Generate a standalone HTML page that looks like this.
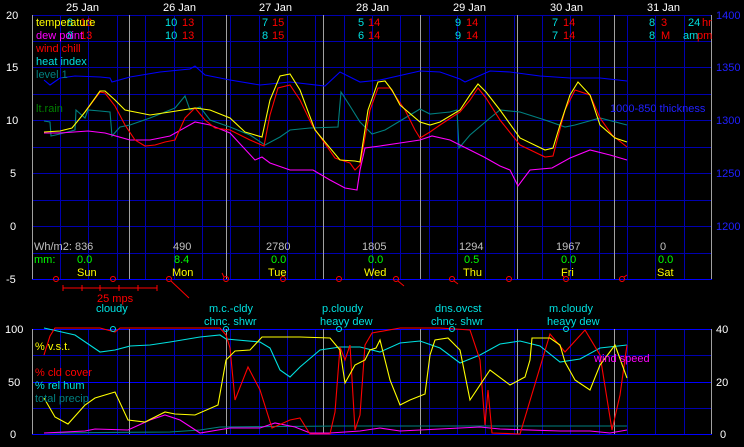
<!DOCTYPE html>
<html><head><meta charset="utf-8"><style>
html,body{margin:0;padding:0;background:#000;width:744px;height:447px;overflow:hidden}
svg{display:block}
text{font-family:"Liberation Sans",sans-serif;font-size:11px}
</style></head><body>
<svg width="744" height="447" viewBox="0 0 744 447" xmlns="http://www.w3.org/2000/svg">
<rect width="744" height="447" fill="#000"/>
<g stroke="#0000b0" stroke-width="1" shape-rendering="crispEdges">
<path d="M32 15.5H712M32 41.5H712M32 67.5H712M32 94.5H712M32 120.5H712M32 147.5H712M32 173.5H712M32 200.5H712M32 226.5H712M32 253.5H712"/>
<path d="M32 355.5H712M32 408.5H712"/>
<path d="M60.5 15V279M88.5 15V279M117.5 15V279M145.5 15V279M174.5 15V279M202.5 15V279M230.5 15V279M259.5 15V279M287.5 15V279M315.5 15V279M344.5 15V279M372.5 15V279M400.5 15V279M429.5 15V279M457.5 15V279M485.5 15V279M514.5 15V279M542.5 15V279M570.5 15V279M599.5 15V279M627.5 15V279M655.5 15V279M684.5 15V279"/>
<path d="M60.5 329V434M88.5 329V434M117.5 329V434M145.5 329V434M174.5 329V434M202.5 329V434M230.5 329V434M259.5 329V434M287.5 329V434M315.5 329V434M344.5 329V434M372.5 329V434M400.5 329V434M429.5 329V434M457.5 329V434M485.5 329V434M514.5 329V434M542.5 329V434M570.5 329V434M599.5 329V434M627.5 329V434M655.5 329V434M684.5 329V434"/>
</g>
<g stroke="#0000ff" shape-rendering="crispEdges"><path d="M32 279.5H712M32 329.5H712M32 382.5H712M32 434.5H712"/></g>
<g stroke="#a0a0a0" shape-rendering="crispEdges">
<path d="M32.5 15V279M129.5 15V279M226.5 15V279M323.5 15V279M420.5 15V279M517.5 15V279M614.5 15V279M711.5 15V279"/>
<path d="M32.5 329V434M129.5 329V434M226.5 329V434M323.5 329V434M420.5 329V434M517.5 329V434M614.5 329V434M711.5 329V434"/>
</g>
<g fill="none" stroke-width="1.1">
<polyline stroke="#0000ff" points="44,80 50,85 60,78 75,76 100,77 110,78 112,82 130,77 160,72 190,69 195,66 205,75 230,80 260,85 290,82 325,86 340,72 360,82 380,80 420,71 440,72 460,79 465,82 490,71 510,72 540,76 570,78 600,78 627,81"/>
<polyline stroke="#008080" points="44,121 50,122 51,136 60,134 75,130 76,110 85,118 88,110 100,111 110,112 112,136 120,127 130,125 150,118 175,108 185,96 190,110 200,107 210,120 230,127 250,135 265,145 280,137 290,130 310,128 338,127 341,92 350,106 360,122 372,134 385,130 400,121 420,109 430,114 440,113 450,112 457,110 459,148 470,135 490,118 500,110 520,112 545,120 565,127 575,125 600,118 627,125"/>
<polyline stroke="#ff00ff" points="44,133 60,133 88,131 105,133 130,140 150,140 170,136 195,122 210,125 230,133 255,160 262,157 270,163 290,170 313,170 330,180 345,188 357,190 360,170 365,148 380,146 400,143 420,140 432,136 450,140 470,150 484,157 500,166 510,170 518,186 530,170 552,168 570,158 590,150 610,155 627,160"/>
<polyline stroke="#ff0000" points="85,112 100,92 105,93 115,106 125,125 135,140 145,146 155,145 165,142 175,140 185,118 195,108 205,120 215,128 230,130 250,140 264,146 270,115 278,88 290,85 300,100 312,125 335,158 350,163 355,170 360,165 370,110 378,88 390,88 405,110 415,130 420,138 430,132 440,125 460,112 470,100 478,88 486,98 500,120 520,145 545,157 553,156 565,110 575,90 590,95 600,118 612,135 627,147"/>
<polyline stroke="#ffff00" points="44,132 60,131 72,128 85,112 100,91 105,91 115,100 125,110 135,112 150,115 170,112 195,108 210,110 230,118 245,132 262,137 270,100 280,76 290,74 300,90 315,130 340,160 355,161 360,162 368,110 378,82 385,81 392,90 400,105 420,122 430,125 440,122 460,110 470,95 478,84 486,92 500,110 520,138 545,150 553,148 560,125 570,95 578,82 590,95 600,125 615,138 627,142"/>
</g>
<g fill="none" stroke-width="1.1">
<polyline stroke="#008080" points="44,433 170,432 200,430 220,427 340,426 627,426"/>
<polyline stroke="#ff00ff" points="44,433 85,431 95,429 128,430 150,420 165,415 180,420 200,433 230,428 260,428 275,423 295,427 310,433 330,433 360,431 380,428 400,431 420,430 480,427 500,429 560,431 590,431 610,433 627,430"/>
<polyline stroke="#00e0e0" points="44,328 75,335 100,352 115,350 130,346 150,345 170,342 200,337 220,335 226,339 260,342 270,348 280,370 290,377 300,367 320,350 340,347 360,347 380,352 400,343 420,341 440,348 460,363 480,355 500,344 520,341 540,346 560,362 580,359 600,348 627,345"/>
<polyline stroke="#ff0000" points="44,355 50,336 55,328 100,328 115,332 120,328 220,328 226,335 230,348 235,400 248,367 260,390 272,428 290,420 300,418 310,434 330,434 335,412 340,347 345,360 350,345 355,430 360,415 365,345 372,333 400,328 440,328 470,330 480,360 485,425 488,390 492,433 520,434 550,334 565,352 585,330 600,355 612,430 620,395 627,345"/>
<polyline stroke="#ffff00" points="44,398 55,417 68,424 85,405 95,398 115,392 128,420 145,422 165,412 175,414 195,415 218,405 226,360 235,351 250,350 262,337 300,337 330,338 340,350 345,383 355,365 365,360 370,350 376,348 380,340 390,380 400,405 410,400 425,394 430,355 435,340 448,338 460,350 470,400 490,370 510,385 525,377 530,360 532,338 550,338 560,345 565,362 575,380 590,390 600,365 615,345 627,378"/>
</g>
<g fill="none" stroke="#ff0000">
<circle cx="56" cy="279" r="2.5"/><circle cx="113" cy="279" r="2.5"/><circle cx="169" cy="279" r="2.5"/><circle cx="226" cy="279" r="2.5"/><circle cx="283" cy="279" r="2.5"/><circle cx="339" cy="279" r="2.5"/><circle cx="396" cy="279" r="2.5"/><circle cx="452" cy="279" r="2.5"/><circle cx="509" cy="279" r="2.5"/><circle cx="566" cy="279" r="2.5"/><circle cx="622" cy="279" r="2.5"/>
<path d="M171 281L189 298M398 281L404 286M454 281L458 284M224 277L222 273M564 277L562 275M624 277L627 275"/>
<path d="M63 288H157M63 285V291M82 285V291M100 285V291M119 285V291M138 285V291M157 285V291"/>
</g>
<g fill="none" stroke="#00e0e0"><circle cx="113" cy="329" r="2.5"/><circle cx="226" cy="329" r="2.5"/><circle cx="339" cy="329" r="2.5"/><circle cx="452" cy="329" r="2.5"/><circle cx="566" cy="329" r="2.5"/></g>
<g fill="#fff">
<text x="6" y="19">20</text><text x="6" y="71">15</text><text x="6" y="124">10</text><text x="10" y="177">5</text><text x="10" y="230">0</text><text x="6" y="283">-5</text>
<text x="5" y="333">100</text><text x="8" y="386">50</text><text x="10" y="438">0</text>
<text x="716" y="333">40</text><text x="716" y="386">20</text><text x="720" y="438">0</text>
<text x="66" y="11">25 Jan</text><text x="163" y="11">26 Jan</text><text x="259" y="11">27 Jan</text><text x="356" y="11">28 Jan</text><text x="453" y="11">29 Jan</text><text x="550" y="11">30 Jan</text><text x="647" y="11">31 Jan</text>
</g>
<g fill="#2020ff"><text x="716" y="19">1400</text><text x="716" y="71">1350</text><text x="716" y="124">1300</text><text x="716" y="177">1250</text><text x="716" y="230">1200</text>
<text x="610" y="112">1000-850 thickness</text></g>
<g fill="#c0c0c0"><text x="34" y="250">Wh/m2: 836</text><text x="173" y="250">490</text><text x="266" y="250">2780</text><text x="362" y="250">1805</text><text x="459" y="250">1294</text><text x="556" y="250">1967</text><text x="660" y="250">0</text></g>
<g fill="#00ff00"><text x="34" y="263">mm:</text><text x="77" y="263">0.0</text><text x="174" y="263">8.4</text><text x="271" y="263">0.0</text><text x="368" y="263">0.0</text><text x="464" y="263">0.5</text><text x="561" y="263">0.0</text><text x="658" y="263">0.0</text></g>
<g fill="#ffff00"><text x="77" y="276">Sun</text><text x="172" y="276">Mon</text><text x="268" y="276">Tue</text><text x="364" y="276">Wed</text><text x="463" y="276">Thu</text><text x="561" y="276">Fri</text><text x="657" y="276">Sat</text></g>
<text x="97" y="302" fill="#ff0000">25 mps</text>
<g fill="#00e0e0">
<text x="96" y="312">cloudy</text><text x="209" y="312">m.c.-cldy</text><text x="204" y="325">chnc. shwr</text>
<text x="322" y="312">p.cloudy</text><text x="320" y="325">heavy dew</text>
<text x="435" y="312">dns.ovcst</text><text x="431" y="325">chnc. shwr</text>
<text x="549" y="312">m.cloudy</text><text x="547" y="325">heavy dew</text>
</g>
<g fill="#00e0e0"><text x="67" y="26">8</text><text x="67" y="39">8</text><text x="165" y="26">10</text><text x="165" y="39">10</text><text x="262" y="26">7</text><text x="262" y="39">8</text><text x="358" y="26">5</text><text x="358" y="39">6</text><text x="455" y="26">9</text><text x="455" y="39">9</text><text x="552" y="26">7</text><text x="552" y="39">7</text><text x="649" y="26">8</text><text x="649" y="39">8</text><text x="688" y="26">24</text><text x="683" y="39">am</text></g>
<g fill="#ff0000"><text x="80" y="26">13</text><text x="80" y="39">13</text><text x="182" y="26">13</text><text x="182" y="39">13</text><text x="272" y="26">15</text><text x="272" y="39">15</text><text x="368" y="26">14</text><text x="368" y="39">14</text><text x="466" y="26">14</text><text x="466" y="39">14</text><text x="563" y="26">14</text><text x="563" y="39">14</text><text x="661" y="26">3</text><text x="661" y="39">M</text><text x="702" y="26">hr</text><text x="697" y="39">pm</text></g>
<text x="36" y="26" fill="#ffff00">temperature</text>
<text x="36" y="39" fill="#ff00ff">dew point</text>
<text x="36" y="52" fill="#ff0000">wind chill</text>
<text x="36" y="65" fill="#00e0e0">heat index</text>
<text x="36" y="78" fill="#008080">level 1</text>
<text x="36" y="112" fill="#008000">lt.rain</text>
<text x="35" y="350" fill="#ffff00">% v.s.t.</text>
<text x="35" y="376" fill="#ff0000">% cld cover</text>
<text x="35" y="389" fill="#00e0e0">% rel hum</text>
<text x="35" y="402" fill="#008080">total precip</text>
<text x="594" y="362" fill="#ff00ff">wind speed</text>
</svg>
</body></html>
